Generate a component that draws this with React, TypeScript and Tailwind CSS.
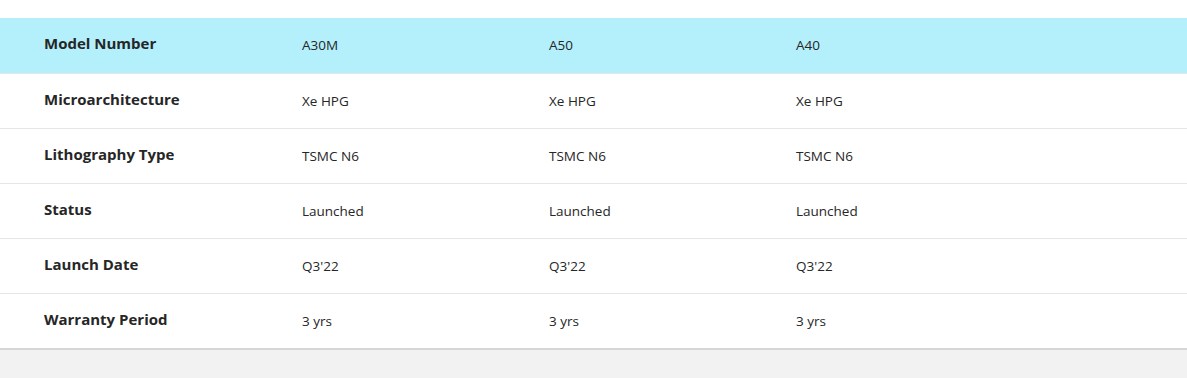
import React from 'react';

const rows = [
  { label: 'Model Number', values: ['A30M', 'A50', 'A40'] },
  { label: 'Microarchitecture', values: ['Xe HPG', 'Xe HPG', 'Xe HPG'] },
  { label: 'Lithography Type', values: ['TSMC N6', 'TSMC N6', 'TSMC N6'] },
  { label: 'Status', values: ['Launched', 'Launched', 'Launched'] },
  { label: 'Launch Date', values: ["Q3'22", "Q3'22", "Q3'22"] },
  { label: 'Warranty Period', values: ['3 yrs', '3 yrs', '3 yrs'] },
];

const App: React.FC = () => {
  return (
    <div className="min-h-[378px] bg-[#f2f2f2] font-['Open_Sans',sans-serif]">
      <div className="bg-white pt-[18px] border-b-2 border-[#d6d6d6]">
        {rows.map((row, i) => (
          <div
            key={row.label}
            className={`grid grid-cols-[302px_247px_247px_1fr] h-[55px] ${
              i === 0 ? 'bg-[#b3f0fc]' : 'border-t border-[#e6e6e6]'
            }`}
          >
            <div className="pl-[44px] pt-[13px] text-[15px] font-bold text-[#262626] leading-[24px]">
              {row.label}
            </div>
            {row.values.map((v, j) => (
              <div key={j} className="pt-[17px] text-[13.5px] text-[#262626] leading-[20px]">
                {v}
              </div>
            ))}
            <div />
          </div>
        ))}
      </div>
    </div>
  );
};

export default App;
